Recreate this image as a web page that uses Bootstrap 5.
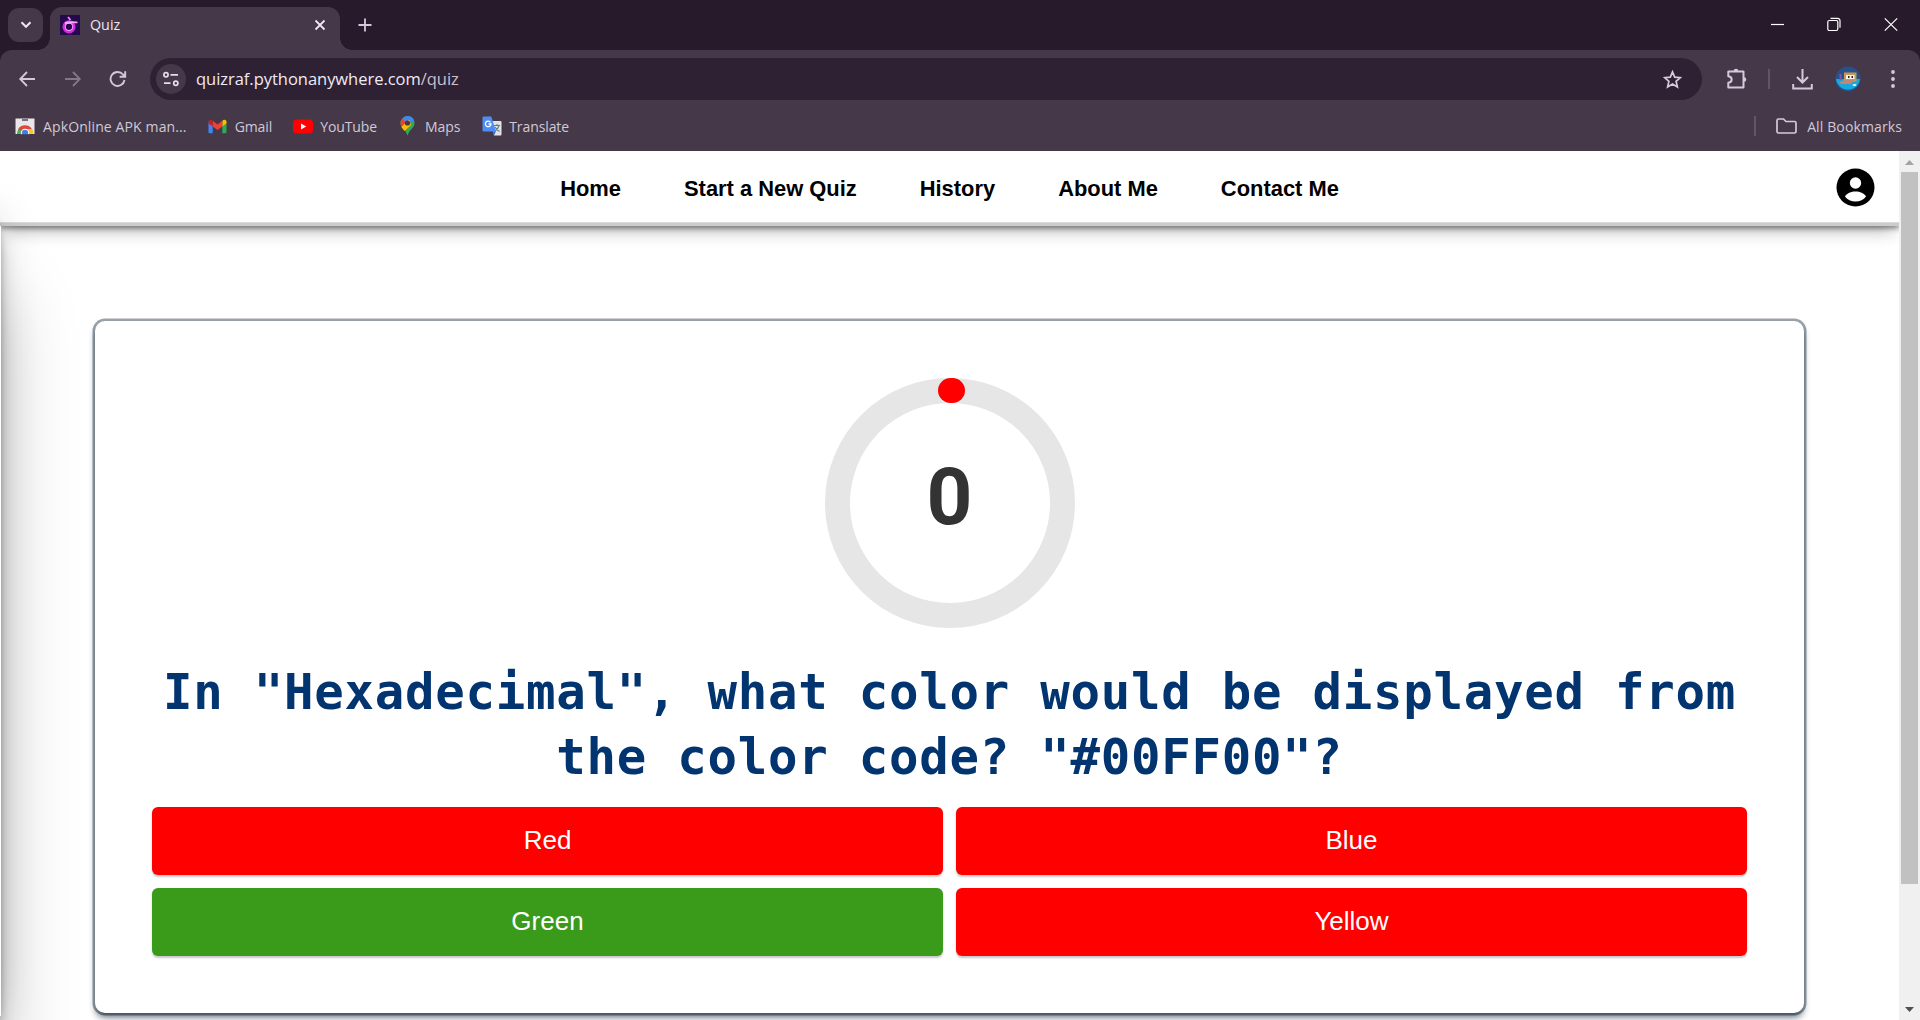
<!DOCTYPE html>
<html lang="en">
<head>
<meta charset="utf-8">
<title>Quiz</title>
<link href="https://cdn.jsdelivr.net/npm/bootstrap@5.3.0/dist/css/bootstrap.min.css" rel="stylesheet">
<style>
  body { height: 1020px; overflow: hidden; font-family: "Open Sans", "Noto Sans", sans-serif; background: #fff; }
  svg { display: block; flex-shrink: 0; }

  /* browser frame */
  .tab-strip { height: 50px; background: #271b2b; padding-left: 8px; }
  .tab-search { width: 35px; height: 34px; margin-top: 8px; border-radius: 11px; background: #443849; }
  .page-tab { width: 290px; height: 43px; margin: 7px 0 0 7px; padding: 0 10px 7px; border-radius: 12px 12px 0 0; background: #443849; color: #eee5f1; font-size: 14.3px; }
  .page-tab::before, .page-tab::after { content: ""; position: absolute; bottom: 0; width: 12px; height: 12px; }
  .page-tab::before { left: -12px; background: radial-gradient(circle at 0 0, transparent 11.5px, #443849 12px); }
  .page-tab::after { right: -12px; background: radial-gradient(circle at 100% 0, transparent 11.5px, #443849 12px); }
  .new-tab { margin: 18px 0 0 18px; }
  .win-buttons { gap: 43px; padding: 17px 22px 0 0; }
  .chrome-back { background: #271b2b; }
  .tool-area { height: 101px; background: #443849; border-radius: 12px 12px 0 0; }
  .tool-row { height: 58px; padding: 0 17px 0 18px; }
  .address-bar { height: 42px; width: 1552px; margin-left: 23px; padding: 0 20px 0 6px; border-radius: 21px; background: #2e2133; font-size: 16.5px; letter-spacing: -.03px; color: #f1eaf3; }
  .site-info { width: 30px; height: 30px; margin-right: 10px; background: #443849; }
  .url-path { color: #cbc0cf; }
  .mark-row { height: 36px; padding: 0 18px 0 15px; font-size: 14px; color: #d3c8d7; letter-spacing: -.1px; }
  .mark-wide { letter-spacing: .12px; }
  .sep-line { width: 2px; height: 20px; background: #62546a; }

  /* page */
  .site-view { height: 869px; overflow: hidden; }
  .site-body { width: 1899px; overflow: hidden; }
  .site-nav { height: 75px; padding-top: 1px; background: #fff; gap: 63px;
    box-shadow: rgba(0,0,0,.4) 0 2.5px 5px, rgba(0,0,0,.3) 0 8.75px 16.25px -3.75px, rgba(0,0,0,.2) 0 -3.75px 0 inset; }
  .site-nav a { font: bold 21.9px "Liberation Sans", Arial, sans-serif; color: #000; text-decoration: none; }
  .user-icon { position: absolute; right: 24px; top: 17px; }
  .side-drawer { position: absolute; left: -374px; top: 75px; width: 375px; height: 790px; z-index: 5; background: #fff;
    box-shadow: rgba(0,0,0,.25) 0 67.5px 68.75px, rgba(0,0,0,.12) 0 -15px 37.5px, rgba(0,0,0,.12) 0 5px 7.5px, rgba(0,0,0,.17) 0 15px 16.25px, rgba(0,0,0,.09) 0 -3.75px 6.25px; }
  .quiz-box { width: 1709px; height: 692px; margin: 95px auto 0; padding: 57px 57px 0; border-radius: 10px; background: #fff;
    box-shadow: rgba(6,24,44,.4) 0 0 0 2.5px, rgba(6,24,44,.65) 0 5px 7.5px -1.25px, rgba(255,255,255,.08) 0 1.25px 0 inset; }
  .timer-ring { width: 250px; height: 250px; border: 25px solid #e6e6e6; font: bold 80px/1 Roboto, sans-serif; color: #333; padding-bottom: 13px; }
  .timer-dot { position: absolute; left: 88px; top: -25px; width: 27px; height: 25px; border-radius: 13px; background: #f00; }
  .question { margin: 32px -10px 0; height: 147px; font: bold 49px/65px "DejaVu Sans Mono", monospace; letter-spacing: .75px; color: #02346f; }
  .answers { gap: 13px; display: grid; grid-template-columns: 1fr 1fr; margin: 0; }
  .answers .btn { height: 68px; border: 0; border-radius: 6px; background: #f00; color: #fff; font: 26px "Liberation Sans", Arial, sans-serif; box-shadow: 0 1.5px 2px rgba(0,0,0,.22); padding: 0 0 1px; }
  .answers .btn.right-one { background: #3a9a1a; }
  .scroll-track { width: 21px; background: #f0f0f0; padding: 9px 3px 8px 2px; }
  .scroll-thumb { width: 17px; height: 712px; margin-top: 7px; background: #c1c1c1; }
</style>
<script src="https://cdn.jsdelivr.net/npm/bootstrap@5.3.0/dist/js/bootstrap.bundle.min.js"></script>
</head>
<body>
<header class="chrome-back">
  <div class="tab-strip d-flex align-items-start">
    <div class="tab-search d-flex align-items-center justify-content-center">
      <svg width="12" height="8" viewBox="0 0 12 8" fill="none" stroke="#f0e6f3" stroke-width="2"><path d="M1.500 1.200 6 5.800l4.500-4.600"/></svg>
    </div>
    <div class="page-tab d-flex align-items-center position-relative">
      <svg width="20" height="20" viewBox="0 0 20 20"><rect width="20" height="20" fill="#240a4c"/><circle cx="9" cy="11.800" r="5" fill="none" stroke="#d52be0" stroke-width="3.200"/><path d="M5 8.500C8 6.500 12 7.500 17.500 7.300" fill="none" stroke="#f6a5f4" stroke-width="1.800"/><path d="m8 2 2.500 3" stroke="#f18df0" stroke-width="1.800"/><circle cx="9" cy="11.800" r="3.800" fill="none" stroke="#fbb5fa" stroke-width=".9"/></svg>
      <span style="margin-left:10px">Quiz</span>
      <svg class="ms-auto me-1" width="12" height="12" viewBox="0 0 12 12" stroke="#f0e6f3" stroke-width="1.800"><path d="m1.500 1.500 9 9m0-9-9 9"/></svg>
    </div>
    <svg class="new-tab" width="14" height="14" viewBox="0 0 14 14" stroke="#d9c7de" stroke-width="1.800"><path d="M7 .5v13M.5 7h13"/></svg>
    <div class="win-buttons ms-auto d-flex">
      <svg width="14" height="15" viewBox="0 0 14 15" stroke="#fff" stroke-width="1.200"><path d="M1 7.500h13"/></svg>
      <svg width="14" height="15" viewBox="0 0 14 15" fill="none" stroke="#fff" stroke-width="1.200"><rect x=".8" y="3.500" width="10" height="10" rx="1.500"/><path d="M3.500 1.300h7a2.500 2.500 0 0 1 2.500 2.500v7"/></svg>
      <svg width="14" height="15" viewBox="0 0 14 15" stroke="#fff" stroke-width="1.200"><path d="m.8 1.300 12.400 12.400m0-12.400L.8 13.700"/></svg>
    </div>
  </div>
  <div class="tool-area">
    <div class="tool-row d-flex align-items-center">
      <svg width="18" height="16" viewBox="0 0 18 16" fill="none" stroke="#d6c5db" stroke-width="1.800"><path d="M17 8H2.500M9 1 2.200 8 9 15"/></svg>
      <svg style="margin-left:28px" width="18" height="16" viewBox="0 0 18 16" fill="none" stroke="#85778b" stroke-width="1.800"><path d="M1 8h14.500M9 1l6.800 7L9 15"/></svg>
      <svg style="margin-left:27px" width="18" height="18" viewBox="0 0 18 18" fill="none" stroke="#d6c5db" stroke-width="1.900"><path d="M15.500 10A7 7 0 1 1 14 4.500l2 2.200M16.200 1.200v5.600h-5.600"/></svg>
      <div class="address-bar d-flex align-items-center">
        <div class="site-info rounded-circle d-flex align-items-center justify-content-center">
          <svg width="16" height="16" viewBox="0 0 16 16" fill="none" stroke="#e6dcea" stroke-width="1.700"><circle cx="3" cy="3.800" r="2.100"/><path d="M7.500 3.800H15M1 12.200h6.500"/><circle cx="12.800" cy="12.200" r="2.100"/></svg>
        </div>
        <span>quizraf.pythonanywhere.com<span class="url-path">/quiz</span></span>
        <svg class="ms-auto" width="19" height="19" viewBox="0 0 19 19" fill="none" stroke="#d5cbd9" stroke-width="1.700"><path d="m9.500 1.800 2.200 5.300 5.700.5-4.300 3.800 1.300 5.600-4.900-3-4.900 3 1.300-5.600-4.300-3.800 5.700-.5z"/></svg>
      </div>
      <svg style="margin-left:24px" width="22" height="22" viewBox="0 0 22 22" fill="none" stroke="#d9c7de" stroke-width="2"><path d="M2.300 3.500h15.200v16H2.300v-4.700c4.500-.5 4.500-6.100 0-6.600z" stroke-linejoin="round"/><path d="M7.700 3a2.300 2.300 0 0 1 4.600 0zM18 9.200a2.300 2.300 0 0 1 0 4.600z" fill="#d9c7de" stroke="none"/></svg>
      <div class="sep-line" style="margin-left:20px"></div>
      <svg style="margin-left:22px" width="21" height="21" viewBox="0 0 21 21" fill="none" stroke="#d9c7de" stroke-width="2"><path d="M10.500 0v13M5 8l5.500 5.500L16 8M1.200 15v4.500h18.600V15"/></svg>
      <svg style="margin-left:22px" width="26" height="26" viewBox="0 0 26 26"><circle cx="13" cy="13" r="12.500" fill="#26518b"/><path d="M.8 13H25.200a12.300 12.300 0 0 1-24.400 0" fill="#18a7df"/><rect x="9" y="6.500" width="12.500" height="9" fill="#c79850"/><rect x="11" y="9" width="8.500" height="4" fill="#f7f3eb"/><path d="M13 10h1.500v2H13zm3.500 0H18v2h-1.500z" fill="#222"/><path d="M4 16.500 10 14h9l-3 4H6z" fill="#c48670"/><path d="M5.500 8v6" stroke="#7d55a9" stroke-width="2"/><ellipse cx="19.500" cy="19" rx="2" ry="1" fill="#e9f5f8"/></svg>
      <svg class="ms-auto" width="20" height="20" viewBox="0 0 20 20" fill="#d9c7de"><circle cx="10" cy="3" r="1.900"/><circle cx="10" cy="10" r="1.900"/><circle cx="10" cy="17" r="1.900"/></svg>
    </div>
    <div class="mark-row d-flex align-items-center">
      <svg width="20" height="18" viewBox="0 0 20 18"><path d="M.5 1.500h19V17H.5z" fill="#e9e7ea"/><path d="M7 3h6" stroke="#554a5a" stroke-width="1.500"/><path d="M2 17a8 8 0 0 1 16 0z" fill="#4caf50"/><path d="M3 12.500a8 8 0 0 1 14 0L10 15z" fill="#df4937"/><path d="M10 12h7.500q.8 2.500.5 5h-8z" fill="#f8c533"/><circle cx="10" cy="16" r="4.200" fill="#fff"/><circle cx="10" cy="16" r="3.200" fill="#3c80ee"/><path d="M0 17.200h20V18H0z" fill="#443849"/></svg>
      <span class="mark-wide" style="margin-left:8px">ApkOnline APK man...</span>
      <svg style="margin-left:21px" width="19" height="15" viewBox="0 0 19 15"><path d="M.5 3v10c0 .8.500 1.300 1.300 1.300h2.900V5z" fill="#4285f4"/><path d="M18.500 3v10c0 .8-.5 1.300-1.300 1.300h-2.900V5z" fill="#34a853"/><path d="M14.300 1.800v5.700l4.200-3.200V2.700C18.500.8 16.500.2 15.100 1.200z" fill="#fbbc04"/><path d="M4.700 7.500V1.800l4.800 3.600 4.800-3.600v5.700L9.500 11z" fill="#ea4335"/><path d="M.5 2.700v1.600l4.200 3.200V1.800l-.8-.6C2.500.2.5.8.500 2.700z" fill="#c5221f"/></svg>
      <span style="margin-left:8px">Gmail</span>
      <svg style="margin-left:21px" width="20" height="15" viewBox="0 0 20 15"><rect y=".5" width="20" height="14" rx="3.500" fill="#f00"/><path d="m8 4.500 5.200 3L8 10.500z" fill="#fff"/></svg>
      <span style="margin-left:7px">YouTube</span>
      <svg style="margin-left:23px" width="15" height="20" viewBox="0 0 15 20"><path d="M7.500 0A7.200 7.200 0 0 1 14.500 7.300C14.500 12 9.500 13 7.500 19.800 5.500 13 .5 12 .5 7.300A7.200 7.200 0 0 1 7.500 0z" fill="#34a853"/><path d="M7.500 0a7.100 7.100 0 0 1 6.500 4L7 9 2.200 2.500A7 7 0 0 1 7.500 0z" fill="#4285f4"/><path d="M2.200 2.500 7 7 1.500 11Q-.8 6 2.200 2.500z" fill="#ea4335"/><path d="m1.300 11 8-7.500L11 9l-6.500 6z" fill="#fbbc04"/><circle cx="7.500" cy="7" r="2.600" fill="#443849"/></svg>
      <span style="margin-left:10px">Maps</span>
      <svg style="margin-left:22px" width="20" height="20" viewBox="0 0 20 20"><path d="M9 5h9.500a1 1 0 0 1 1 1v12.500a1 1 0 0 1-1 1H12z" fill="#e3e3e3"/><path d="M1.500.5h7.800L14 15.500H1.500a1 1 0 0 1-1-1v-13a1 1 0 0 1 1-1z" fill="#4e8df5"/><path d="m10.500 15.500 3.500 0-2 3.700z" fill="#3367d6"/><path d="M8.500 6.300A2.800 2.800 0 1 0 9 8H6.500" fill="none" stroke="#fff" stroke-width="1.300"/><path d="M12 9.500h6M15 8v1.500m2 0q-1 4-4 5.500m0-4q1.500 3 4.500 4.500" fill="none" stroke="#607d8b" stroke-width="1.100"/></svg>
      <span style="margin-left:7px">Translate</span>
      <div class="sep-line ms-auto"></div>
      <svg style="margin-left:20px" width="21" height="16" viewBox="0 0 21 16" fill="none" stroke="#d6c9da" stroke-width="1.700"><path d="M1 13.500V2.500Q1 1 2.500 1h5l2.500 2.500h8.500Q20 3.500 20 5v8.500q0 1.500-1.500 1.500h-16Q1 15 1 13.500z"/></svg>
      <span class="mark-wide" style="margin-left:10px">All Bookmarks</span>
    </div>
  </div>
</header>

<div class="site-view d-flex">
  <main class="site-body position-relative">
    <nav class="site-nav position-relative d-flex align-items-center justify-content-center">
      <a href="#">Home</a>
      <a href="#">Start a New Quiz</a>
      <a href="#">History</a>
      <a href="#">About Me</a>
      <a href="#">Contact Me</a>
      <svg class="user-icon" width="39" height="39" viewBox="0 0 39 39"><circle cx="19.500" cy="19.500" r="19" fill="#000"/><circle cx="19.500" cy="15" r="5.700" fill="#fff"/><path d="M9 28.500c2-3.500 6-5 10.500-5s8.500 1.500 10.500 5c-2.500 3.500-6 5-10.500 5s-8-1.500-10.500-5z" fill="#fff"/></svg>
    </nav>
    <aside class="side-drawer"></aside>
    <section class="quiz-box">
      <div class="timer-ring rounded-circle mx-auto position-relative d-flex align-items-center justify-content-center">
        <span class="timer-dot"></span>0
      </div>
      <h1 class="question text-center">In "Hexadecimal", what color would be displayed from<br>the color code? "#00FF00"?</h1>
      <div class="answers">
        <button class="btn">Red</button>
        <button class="btn">Blue</button>
        <button class="btn right-one">Green</button>
        <button class="btn">Yellow</button>
      </div>
    </section>
  </main>
  <div class="scroll-track d-flex flex-column">
    <svg class="mx-auto" width="9" height="5" viewBox="0 0 9 5"><path d="M4.500 0 9 5H0z" fill="#a3a3a3"/></svg>
    <div class="scroll-thumb"></div>
    <svg class="mx-auto mt-auto" width="9" height="5" viewBox="0 0 9 5"><path d="M0 0h9L4.500 5z" fill="#505050"/></svg>
  </div>
</div>
</body>
</html>
